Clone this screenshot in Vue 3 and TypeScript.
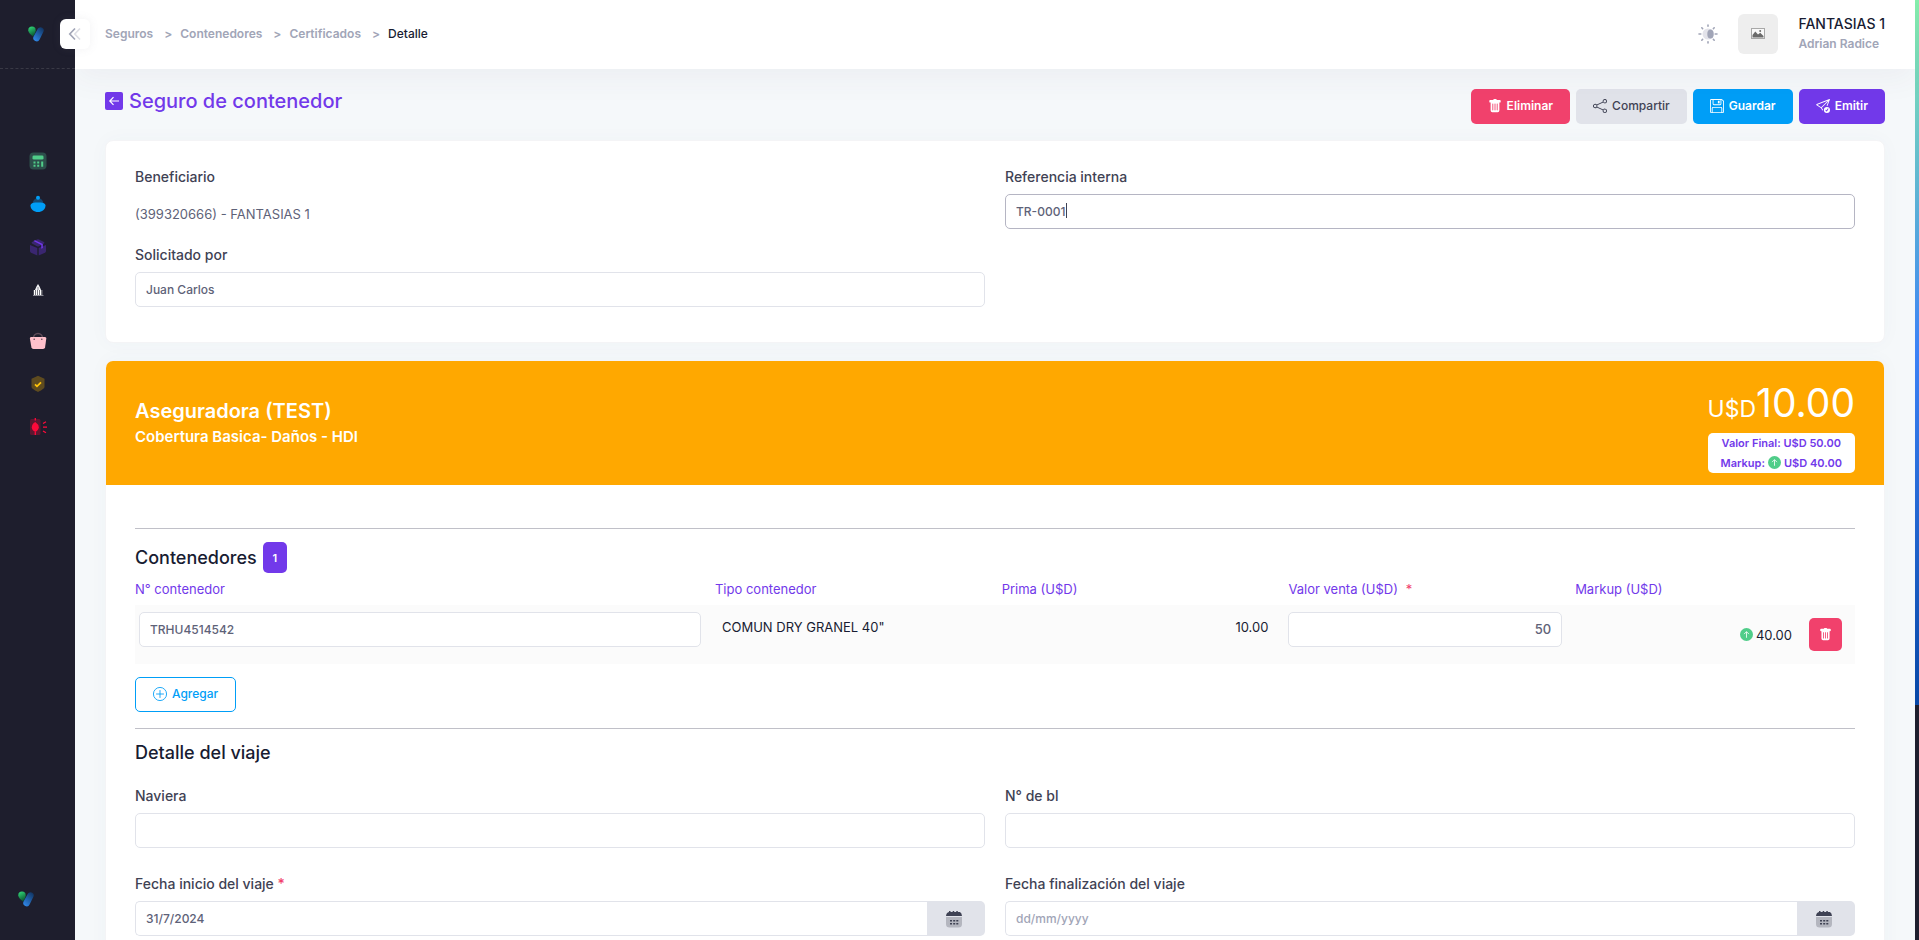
<script setup lang="ts">
import { ref } from 'vue'

interface Crumb { label: string; href: string }

const crumbs: Crumb[] = [
  { label: 'Seguros', href: '#seguros' },
  { label: 'Contenedores', href: '#contenedores' },
  { label: 'Certificados', href: '#certificados' },
]

const reference = ref('TR-0001')
const requestedBy = ref('Juan Carlos')
const container = ref('TRHU4514542')
const salePrice = ref('50')
const carrier = ref('')
const bl = ref('')
const startDate = ref('31/7/2024')
const endDate = ref('')
</script>

<template>
  <div class="app">
    <aside class="sidebar">
      <a class="brand" href="#inicio" aria-label="Inicio">
        <svg class="logo" viewBox="0 0 16 16">
          <defs>
            <linearGradient id="leafTop" x1="0" y1="0" x2="0.4" y2="1">
              <stop offset="0" stop-color="#34e07c" />
              <stop offset="1" stop-color="#0b5c33" />
            </linearGradient>
            <linearGradient id="barTop" x1="0.9" y1="0" x2="0.2" y2="1">
              <stop offset="0" stop-color="#10325e" />
              <stop offset="1" stop-color="#2f86e6" />
            </linearGradient>
          </defs>
          <path d="M4 .5a3.700 3.700 0 0 1 3.700 3.700C7.700 6 6.500 8.500 5 10.500 2.500 8.500.3 6.500.3 4.200A3.700 3.700 0 0 1 4 .5z" fill="url(#leafTop)" />
          <path d="M12.700 1.200a3.100 3.100 0 0 1 2.600 4.700l-3.700 7.500a3.300 3.300 0 0 1-6-2.900L9.800 2.800a3.200 3.200 0 0 1 2.900-1.600z" fill="url(#barTop)" />
        </svg>
      </a>
      <nav class="menu" aria-label="Principal">
        <a href="#calculadora" aria-label="Calculadora">
          <svg viewBox="0 0 18 18"><rect x=".5" y=".5" width="17" height="17" rx="4" fill="#2d4f4b" /><rect x="3.500" y="3.500" width="11" height="4" rx="1.300" fill="#50cd89" /><path d="M4.500 9.500h2v2h-2zM8.200 9.500h2v2h-2zM4.500 12.800h2v2h-2zM8.200 12.800h2v2h-2zM12.200 9.500h2v5.300h-2z" fill="#50cd89" /></svg>
        </a>
        <a href="#campana" aria-label="Servicios">
          <svg viewBox="0 0 18 18"><path d="M3.500 9a5.500 6 0 0 1 11 0z" fill="#154a73" /><circle cx="9" cy="2.800" r="2" fill="#009ef7" /><path d="M1.500 10.500C1.500 8 5 7.500 9 7.500s7.500.5 7.500 3c0 4-3.500 6.500-7.500 6.500s-7.500-2.500-7.500-6.500z" fill="#009ef7" /></svg>
        </a>
        <a href="#paquetes" aria-label="Paquetes">
          <svg viewBox="0 0 18 18"><path d="M1 7l7.300 3v7.500L2 14.800Q1 14 1 13zM17 7v6q0 1-1 1.800l-6.300 2.700V10zM3 4l5-2.500q1-.5 2 0l5 2.500q1 .7 0 1.400L10 8.200q-1 .4-2 0L3 5.400Q2 4.700 3 4z" fill="#3a2670" /><path d="M4.500 3l1.500-.8L13.800 6v4l-1.500.8V7z" fill="#7239ea" /></svg>
        </a>
        <a href="#edificio" aria-label="Institucional">
          <svg viewBox="0 0 18 18"><path d="M9 3l1.500 2.500 1.800 4H5.700l1.800-4z" fill="#f4f4f6" /><path d="M8.500 6h1v3h-1z" fill="#8a8a94" /><path d="M4.500 9h9v5h-9z" fill="#77777f" /><path d="M5.500 9v5M7.500 9v5M9.500 9v5M11.500 9v5" stroke="#fff" /><path d="M4 14h10.500v1H4z" fill="#8a8a94" /></svg>
        </a>
        <a class="spaced" href="#compras" aria-label="Compras">
          <svg viewBox="0 0 18 18"><path d="M4.500 6a4.500 4.500 0 0 1 9 0" fill="none" stroke="#5d4a57" stroke-width="1.600" /><path d="M2 5h14q1.500 0 1.300 1.500l-1.200 8.800Q15.800 17 14 17H4.500q-1.800 0-2.100-1.700L.9 6.500Q.7 5 2 5z" fill="#ffc0cb" /><circle cx="5.200" cy="7.300" r=".8" fill="#5d4a57" /><circle cx="12.800" cy="7.300" r=".8" fill="#5d4a57" /></svg>
        </a>
        <a href="#polizas" aria-label="Pólizas">
          <svg viewBox="0 0 18 18"><path d="M9 .8l6.500 3V12c0 1.200-3 3.300-6.500 5-3.500-1.700-6.500-3.800-6.500-5V3.800z" fill="#5e4b1f" /><path d="M6 9.300l2 2 4-4" fill="none" stroke="#ffc30b" stroke-width="1.800" /></svg>
        </a>
        <a href="#alertas" aria-label="Alertas">
          <svg viewBox="0 0 18 18"><rect x="1" y="1" width="10.500" height="16" rx="1.500" fill="#5d1730" /><path d="M6.300 4q3.500 2.500 3.500 5.300T6.300 14Q2.800 12.500 2.800 9.300T6.300 4z" fill="#ff0a3a" /><path d="M6.300 0v2.500M6.300 14v3M14 5.500l3-1.800M14 9.200h4M14 13l3 1.800" stroke="#ff0a3a" stroke-width="1.300" /></svg>
        </a>
      </nav>
      <svg class="logo foot" viewBox="0 0 16 16" aria-hidden="true">
        <path d="M4 .5a3.700 3.700 0 0 1 3.700 3.700C7.700 6 6.500 8.500 5 10.500 2.500 8.500.3 6.500.3 4.200A3.700 3.700 0 0 1 4 .5z" fill="url(#leafTop)" />
        <path d="M12.700 1.200a3.100 3.100 0 0 1 2.600 4.700l-3.700 7.500a3.300 3.300 0 0 1-6-2.900L9.800 2.800a3.200 3.200 0 0 1 2.900-1.600z" fill="url(#barTop)" />
      </svg>
      <button class="toggle" type="button" aria-label="Contraer menú">
        <svg viewBox="0 0 14 14"><path d="M7 1.500L1.800 7 7 12.500" fill="none" stroke="#a1a5b7" stroke-width="1.700" /><path d="M12 1.500L6.800 7l5.200 5.500" fill="none" stroke="#dddee5" stroke-width="1.700" /></svg>
      </button>
    </aside>

    <div class="page">
      <header class="topbar">
        <nav class="crumbs" aria-label="Ruta">
          <template v-for="c in crumbs" :key="c.label">
            <a :href="c.href">{{ c.label }}</a><span class="sep">&gt;</span>
          </template>
          <span class="here">Detalle</span>
        </nav>
        <div class="user">
          <button class="theme" type="button" aria-label="Cambiar tema">
            <svg viewBox="0 0 20 20"><circle cx="10" cy="10" r="5.500" fill="#e3e3ea" /><ellipse cx="12.500" cy="10" rx="3.200" ry="4.500" fill="#a1a5b7" /><g stroke="#a1a5b7" stroke-width="1.600" stroke-linecap="round"><path d="M10 1v1.200M10 17.800V19M1 10h1.800M17.200 10H19M3.800 3.800l.8.800M15.400 15.400l.8.800M3.800 16.200l.8-.8M15.400 4.600l.8-.8" /></g></svg>
          </button>
          <div class="avatar">
            <svg viewBox="0 0 14 11"><rect x=".5" y=".5" width="13" height="10" fill="#f8f8f8" stroke="#a8a8a8" /><path d="M1.500 9.500V7l2.800-3.500L7 6.500l2.200-1.700L12.500 8v1.500z" fill="#6a6a6a" /><circle cx="9.200" cy="3" r="1" fill="#6a6a6a" /></svg>
          </div>
          <div class="who">
            <span class="company">FANTASIAS 1</span>
            <span class="person">Adrian Radice</span>
          </div>
        </div>
      </header>

      <main class="content">
        <div class="toolbar">
          <h1>
            <a class="back" href="#certificados" aria-label="Volver">
              <svg viewBox="0 0 18 18"><rect width="18" height="18" rx="2" fill="#7239ea" /><path d="M14 9H5M8.500 5.200L4.800 9l3.700 3.800" fill="none" stroke="#fff" stroke-width="1.200" /></svg>
            </a>
            Seguro de contenedor
          </h1>
          <div class="actions">
            <button class="btn danger" type="button">
              <svg viewBox="0 0 16 16"><path d="M2.500 1a1 1 0 0 0-1 1v1a1 1 0 0 0 1 1H3v9a2 2 0 0 0 2 2h6a2 2 0 0 0 2-2V4h.5a1 1 0 0 0 1-1V2a1 1 0 0 0-1-1H10a1 1 0 0 0-1-1H7a1 1 0 0 0-1 1zm3 4a.5.500 0 0 1 .5.500v7a.5.500 0 0 1-1 0v-7a.5.500 0 0 1 .5-.5M8 5a.5.500 0 0 1 .5.500v7a.5.500 0 0 1-1 0v-7A.5.500 0 0 1 8 5m3 .5v7a.5.500 0 0 1-1 0v-7a.5.500 0 0 1 1 0" /></svg>
              Eliminar
            </button>
            <button class="btn light" type="button">
              <svg viewBox="0 0 16 16"><path d="M13.500 1a1.500 1.500 0 1 0 0 3 1.500 1.500 0 0 0 0-3M11 2.500a2.500 2.500 0 1 1 .603 1.628l-6.718 3.120a2.500 2.500 0 0 1 0 1.504l6.718 3.120a2.500 2.500 0 1 1-.488.876l-6.718-3.120a2.500 2.500 0 1 1 0-3.256l6.718-3.120A2.500 2.500 0 0 1 11 2.500m-8.500 4a1.500 1.500 0 1 0 0 3 1.500 1.500 0 0 0 0-3m11 5.500a1.500 1.500 0 1 0 0 3 1.500 1.500 0 0 0 0-3" /></svg>
              Compartir
            </button>
            <button class="btn info" type="button">
              <svg viewBox="0 0 16 16"><path d="M11 2H9v3h2z" /><path d="M1.500 0h11.586a1.500 1.500 0 0 1 1.060.44l1.415 1.414A1.500 1.500 0 0 1 16 2.914V14.500a1.500 1.500 0 0 1-1.500 1.500h-13A1.500 1.500 0 0 1 0 14.500v-13A1.500 1.500 0 0 1 1.500 0M1 1.500v13a.5.500 0 0 0 .5.500H2v-4.500A1.500 1.500 0 0 1 3.500 9h9a1.500 1.500 0 0 1 1.500 1.500V15h.5a.5.500 0 0 0 .5-.5V2.914a.5.500 0 0 0-.146-.353l-1.415-1.415A.5.500 0 0 0 13.086 1H13v4.500A1.500 1.500 0 0 1 11.500 7h-7A1.500 1.500 0 0 1 3 5.500V1H1.500a.5.500 0 0 0-.5.500m3 4a.5.500 0 0 0 .5.500h7a.5.500 0 0 0 .5-.5V1H4zM3 15h10v-4.500a.5.500 0 0 0-.5-.5h-9a.5.500 0 0 0-.5.500z" /></svg>
              Guardar
            </button>
            <button class="btn primary" type="submit">
              <svg viewBox="0 0 16 16"><path d="M15.964.686a.5.500 0 0 0-.65-.65L.767 5.855a.75.750 0 0 0-.124 1.329l4.995 3.178 1.531 2.406a.5.500 0 0 0 .844-.536L6.637 10.070l7.494-7.494-1.895 4.738a.5.500 0 1 0 .928.372zm-2.540 1.183L5.930 9.363 1.591 6.602z" /><path d="M16 12.500a3.500 3.500 0 1 1-7 0 3.500 3.500 0 0 1 7 0m-1.993-1.679a.5.500 0 0 0-.686.172l-1.170 1.950-.547-.547a.5.500 0 0 0-.708.708l.774.773a.75.750 0 0 0 1.174-.144l1.335-2.226a.5.500 0 0 0-.172-.686" /></svg>
              Emitir
            </button>
          </div>
        </div>

        <section class="card general">
          <div class="grid">
            <div class="field">
              <span class="label">Beneficiario</span>
              <span class="plain">(399320666) - FANTASIAS 1</span>
            </div>
            <div class="field">
              <label class="label" for="ref">Referencia interna</label>
              <div class="focused">
                <input id="ref" v-model="reference" class="input" type="text" />
                <span class="caret" aria-hidden="true"></span>
              </div>
            </div>
            <div class="field">
              <label class="label" for="req">Solicitado por</label>
              <input id="req" v-model="requestedBy" class="input" type="text" />
            </div>
          </div>
        </section>

        <section class="card">
          <div class="banner">
            <div>
              <h2>Aseguradora (TEST)</h2>
              <p>Cobertura Basica- Daños - HDI</p>
            </div>
            <div class="price">
              <div class="amount"><span class="cur">U$D</span>10.00</div>
              <div class="totals">
                <span>Valor Final: U$D 50.00</span>
                <span class="markup">Markup:
                  <svg viewBox="0 0 16 16"><circle cx="8" cy="8" r="8" fill="#50cd89" /><path d="M8 12V4.500M5 7.500l3-3 3 3" fill="none" stroke="#fff" /></svg>
                  U$D 40.00</span>
              </div>
            </div>
          </div>

          <div class="body">
            <hr />
            <h3 class="count-title">Contenedores <span class="count">1</span></h3>
            <table>
              <colgroup>
                <col class="c-first" />
                <col class="c-mid" />
                <col class="c-mid" />
                <col class="c-mid" />
                <col />
              </colgroup>
              <thead>
                <tr>
                  <th scope="col">N° contenedor</th>
                  <th scope="col">Tipo contenedor</th>
                  <th scope="col">Prima (U$D)</th>
                  <th scope="col">Valor venta (U$D) <span class="req wide">*</span></th>
                  <th scope="col">Markup (U$D)</th>
                </tr>
              </thead>
              <tbody>
                <tr>
                  <td class="t-num"><input v-model="container" class="input" type="text" aria-label="N° contenedor" /></td>
                  <td class="t-type">COMUN DRY GRANEL 40"</td>
                  <td class="t-prima">10.00</td>
                  <td class="t-sale"><input v-model="salePrice" class="input right" type="text" aria-label="Valor venta (U$D)" /></td>
                  <td class="t-markup">
                    <div class="markup-cell">
                      <span class="gain">
                        <svg viewBox="0 0 16 16"><circle cx="8" cy="8" r="8" fill="#50cd89" /><path d="M8 12V4.500M5 7.500l3-3 3 3" fill="none" stroke="#fff" /></svg>
                        40.00
                      </span>
                      <button class="del" type="button" aria-label="Eliminar contenedor">
                        <svg viewBox="0 0 16 16"><path d="M2.500 1a1 1 0 0 0-1 1v1a1 1 0 0 0 1 1H3v9a2 2 0 0 0 2 2h6a2 2 0 0 0 2-2V4h.5a1 1 0 0 0 1-1V2a1 1 0 0 0-1-1H10a1 1 0 0 0-1-1H7a1 1 0 0 0-1 1zm3 4a.5.500 0 0 1 .5.500v7a.5.500 0 0 1-1 0v-7a.5.500 0 0 1 .5-.5M8 5a.5.500 0 0 1 .5.500v7a.5.500 0 0 1-1 0v-7A.5.500 0 0 1 8 5m3 .5v7a.5.500 0 0 1-1 0v-7a.5.500 0 0 1 1 0" /></svg>
                      </button>
                    </div>
                  </td>
                </tr>
              </tbody>
            </table>
            <button class="btn outline" type="button">
              <svg viewBox="0 0 16 16"><circle cx="8" cy="8" r="7.500" fill="none" stroke="currentColor" /><path d="M8 4v8M4 8h8" stroke="currentColor" stroke-linecap="round" /></svg>
              Agregar
            </button>
            <hr />
            <h3 class="trip-title">Detalle del viaje</h3>
            <div class="grid trip">
              <div class="field">
                <label class="label" for="nav">Naviera</label>
                <input id="nav" v-model="carrier" class="input" type="text" />
              </div>
              <div class="field">
                <label class="label" for="bl">N° de bl</label>
                <input id="bl" v-model="bl" class="input" type="text" />
              </div>
              <div class="field">
                <label class="label" for="start">Fecha inicio del viaje <span class="req">*</span></label>
                <div class="group">
                  <input id="start" v-model="startDate" class="input" type="text" />
                  <button class="cal" type="button" aria-label="Elegir fecha de inicio">
                    <svg viewBox="0 0 18 18"><path d="M1 7h16v7q0 3.500-3.500 3.500h-9Q1 17.500 1 14z" fill="#b4b6bf" /><path d="M1 6q.3-3.500 3-4V1h1.500v1h2.200V1h1.500v1h2.100V1h1.500v1h2.200q1.800.8 2 4z" fill="#3f4254" /><path d="M5 10h2v1.500H5zM8.200 10h2v1.500h-2zM11.300 10h2v1.500h-2zM5 13h2v1.500H5zM8.200 13h2v1.500h-2zM11.300 13h2v1.500h-2z" fill="#3f4254" /></svg>
                  </button>
                </div>
              </div>
              <div class="field">
                <label class="label" for="end">Fecha finalización del viaje</label>
                <div class="group">
                  <input id="end" v-model="endDate" class="input" type="text" placeholder="dd/mm/yyyy" />
                  <button class="cal" type="button" aria-label="Elegir fecha de finalización">
                    <svg viewBox="0 0 18 18"><path d="M1 7h16v7q0 3.500-3.500 3.500h-9Q1 17.500 1 14z" fill="#b4b6bf" /><path d="M1 6q.3-3.500 3-4V1h1.500v1h2.200V1h1.500v1h2.100V1h1.500v1h2.200q1.800.8 2 4z" fill="#3f4254" /><path d="M5 10h2v1.500H5zM8.200 10h2v1.500h-2zM11.300 10h2v1.500h-2zM5 13h2v1.500H5zM8.200 13h2v1.500h-2zM11.300 13h2v1.500h-2z" fill="#3f4254" /></svg>
                  </button>
                </div>
              </div>
            </div>
          </div>
        </section>
      </main>
    </div>

    <div class="scroll-track" aria-hidden="true"><div class="scroll-thumb"></div></div>
  </div>
</template>

<style>
body {
  margin: 0;
  overflow: hidden;
}
</style>

<style scoped>
.app {
  display: flex;
  height: 100vh;
  overflow: hidden;
  background: #f5f8fa;
  color: #181c32;
  font-family: Inter, "Liberation Sans", sans-serif;
  font-size: 13px;
  line-height: 20px;
}
.app *,
.app {
  box-sizing: border-box;
}
svg {
  display: block;
}
a {
  color: inherit;
  text-decoration: none;
}
button {
  border: 0;
  padding: 0;
  font: inherit;
  cursor: pointer;
}
h1,
h2,
h3,
p {
  margin: 0;
}

.sidebar {
  position: relative;
  z-index: 3;
  display: flex;
  flex: none;
  flex-direction: column;
  width: 75px;
  background: #1e1e2d;
}
.brand {
  display: flex;
  align-items: center;
  height: 69px;
  padding-left: 28px;
  border-bottom: 1px dashed #393945;
}
.logo {
  width: 16px;
  height: 16px;
}
.foot {
  margin: auto 0 33px 18px;
}
.menu {
  display: flex;
  flex-direction: column;
  align-items: center;
  padding-top: 83px;
  gap: 25px;
}
.menu svg {
  width: 18px;
  height: 18px;
}
.menu .spaced {
  margin-top: 8px;
}
.toggle {
  position: absolute;
  top: 19px;
  right: -15px;
  display: grid;
  place-items: center;
  width: 30px;
  height: 30px;
  border-radius: 6px;
  background: #fff;
  box-shadow: 0 0 10px rgba(113, 121, 136, 0.1);
}
.toggle svg {
  width: 14px;
  height: 14px;
}

.page {
  display: flex;
  flex: 1;
  flex-direction: column;
  min-width: 0;
}
.topbar {
  position: relative;
  z-index: 2;
  display: flex;
  flex: none;
  align-items: center;
  justify-content: space-between;
  height: 69px;
  padding: 0 30px 2px;
  background: #fff;
  box-shadow: 0 10px 30px rgba(82, 63, 105, 0.05);
}
.crumbs {
  display: flex;
  color: #a1a5b7;
  font-size: 12px;
  font-weight: 600;
}
.crumbs .sep {
  margin: 0 8px 0 11px;
}
.crumbs .here {
  color: #181c32;
  font-weight: 500;
}
.user {
  display: flex;
  align-items: center;
}
.theme {
  background: none;
}
.theme svg {
  width: 20px;
  height: 20px;
}
.avatar {
  display: grid;
  place-items: center;
  width: 40px;
  height: 40px;
  margin: 0 20px;
  border-radius: 6px;
  background: #eee;
}
.avatar svg {
  width: 14px;
  height: 11px;
}
.who {
  display: flex;
  flex-direction: column;
}
.company {
  font-size: 14px;
  font-weight: 500;
}
.person {
  color: #a1a5b7;
  font-size: 12px;
  font-weight: 600;
}

.content {
  flex: 1;
  min-height: 0;
  padding: 20px 30px 0;
  overflow: hidden;
}
.toolbar {
  display: flex;
  justify-content: space-between;
  height: 51px;
}
h1 {
  display: flex;
  align-items: center;
  gap: 6px;
  height: 24px;
  color: #7239ea;
  font-size: 20px;
  font-weight: 500;
}
.back svg {
  width: 18px;
  height: 18px;
}
.actions {
  display: flex;
  align-items: flex-start;
  gap: 6px;
}
.btn {
  display: inline-flex;
  align-items: center;
  gap: 5px;
  height: 35px;
  padding: 0 17px 1px;
  border-radius: 5px;
  color: #fff;
  font-size: 12px;
  font-weight: 600;
}
.btn svg {
  width: 14px;
  height: 14px;
  fill: currentColor;
}
.danger {
  background: #f1416c;
}
.light {
  background: #e1e3ea;
  color: #3f4254;
  font-weight: 500;
}
.info {
  background: #009ef7;
}
.primary {
  background: #7239ea;
}
.outline {
  margin: 13px 0 16px;
  border: 1px solid #009ef7;
  background: #fff;
  color: #009ef7;
  font-weight: 500;
}

.card {
  margin-bottom: 17px;
  border: 1px solid #f4f4f6;
  border-radius: 8px;
  background: #fff;
  box-shadow: 0 0 20px rgba(76, 87, 125, 0.03);
}
.general {
  padding: 26px 29px 35px;
}
.grid {
  display: grid;
  grid-template-columns: 1fr 1fr;
  gap: 16px 20px;
}
.field {
  display: flex;
  flex-direction: column;
  min-width: 0;
}
.label {
  margin-bottom: 7px;
  color: #3f4254;
  font-size: 14px;
  font-weight: 500;
}
.plain {
  padding-top: 10px;
  color: #5e6278;
}
.input {
  width: 100%;
  height: 35px;
  padding: 0 10px 1px;
  border: 1px solid #e1e3ea;
  border-radius: 5px;
  outline: 0;
  background: #fff;
  color: #5e6278;
  font: inherit;
  font-size: 12px;
  font-weight: 500;
}
.input::placeholder {
  color: #a1a5b7;
  opacity: 1;
}
.input.right {
  font-size: 13px;
  text-align: right;
}
.focused {
  position: relative;
}
.focused .input {
  border-color: #b5b5c3;
  caret-color: transparent;
}
.caret {
  position: absolute;
  top: 9px;
  left: 61px;
  width: 1px;
  height: 15px;
  background: #3f4254;
}

.banner {
  display: flex;
  align-items: center;
  justify-content: space-between;
  height: 124px;
  padding: 0 29px;
  border-radius: 7px 7px 0 0;
  background: #ffa800;
  color: #fff;
}
.banner h2 {
  font-size: 20px;
  font-weight: 600;
  line-height: 28px;
}
.banner p {
  font-size: 15px;
  font-weight: 600;
  line-height: 24px;
}
.price {
  padding-top: 5px;
}
.amount {
  font-size: 39px;
  line-height: 48px;
  text-align: right;
}
.cur {
  font-size: 23px;
}
.totals {
  display: flex;
  flex-direction: column;
  align-items: center;
  padding: 0 12px;
  border-radius: 5px;
  background: #fff;
  color: #7239ea;
  font-size: 11px;
  font-weight: 600;
}
.markup {
  display: flex;
  align-items: center;
  gap: 3px;
}
.markup svg,
.gain svg {
  width: 13px;
  height: 13px;
}

.body {
  padding: 43px 29px 40px;
}
hr {
  height: 1px;
  margin: 0;
  border: 0;
  background: #c0c0c8;
}
h3 {
  font-size: 18px;
  font-weight: 500;
}
.count-title {
  display: flex;
  align-items: center;
  gap: 6px;
  margin-top: 13px;
}
.count {
  display: grid;
  place-items: center;
  width: 24px;
  height: 31px;
  border-radius: 5px;
  background: #7239ea;
  color: #fff;
  font-size: 11px;
  font-weight: 600;
}
table {
  width: 100%;
  border-spacing: 0;
  table-layout: fixed;
}
.c-first {
  width: 33.72%;
}
.c-mid {
  width: 16.67%;
}
th {
  height: 32px;
  padding: 0;
  color: #7239ea;
  font-weight: 400;
  text-align: left;
}
.req {
  color: #f1416c;
}
.wide {
  margin-left: 4px;
}
td {
  height: 59px;
  padding: 0;
  background: #fbfbfb;
  vertical-align: top;
}
.t-num {
  padding: 7px 14px 0 4px;
}
.t-type {
  padding: 12px 0 0 7px;
}
.t-prima {
  padding: 12px 20px 0 0;
  text-align: right;
}
.t-sale {
  padding: 7px 13px 0 0;
}
.markup-cell {
  display: flex;
  align-items: center;
  justify-content: flex-end;
  gap: 17px;
  padding: 13px 13px 0 0;
}
.gain {
  display: flex;
  align-items: center;
  gap: 3px;
}
.del {
  display: grid;
  place-items: center;
  width: 33px;
  height: 33px;
  border-radius: 5px;
  background: #f1416c;
}
.del svg {
  width: 13px;
  height: 13px;
  fill: #fff;
}
.trip-title {
  margin-top: 14px;
}
.trip {
  row-gap: 26px;
  margin-top: 23px;
}
.group {
  display: flex;
}
.group .input {
  flex: 1;
  min-width: 0;
  border-right: 0;
  border-radius: 5px 0 0 5px;
}
.cal {
  display: grid;
  flex: none;
  place-items: center;
  width: 58px;
  height: 35px;
  padding-right: 4px;
  border-radius: 0 5px 5px 0;
  background: #e1e3ea;
}
.cal svg {
  width: 18px;
  height: 18px;
}

.scroll-track {
  flex: none;
  width: 4px;
  background: #1e1e2d;
}
.scroll-thumb {
  height: 75%;
  background: linear-gradient(#86efac, #3b82f6 50%, #0747a6);
}
</style>
